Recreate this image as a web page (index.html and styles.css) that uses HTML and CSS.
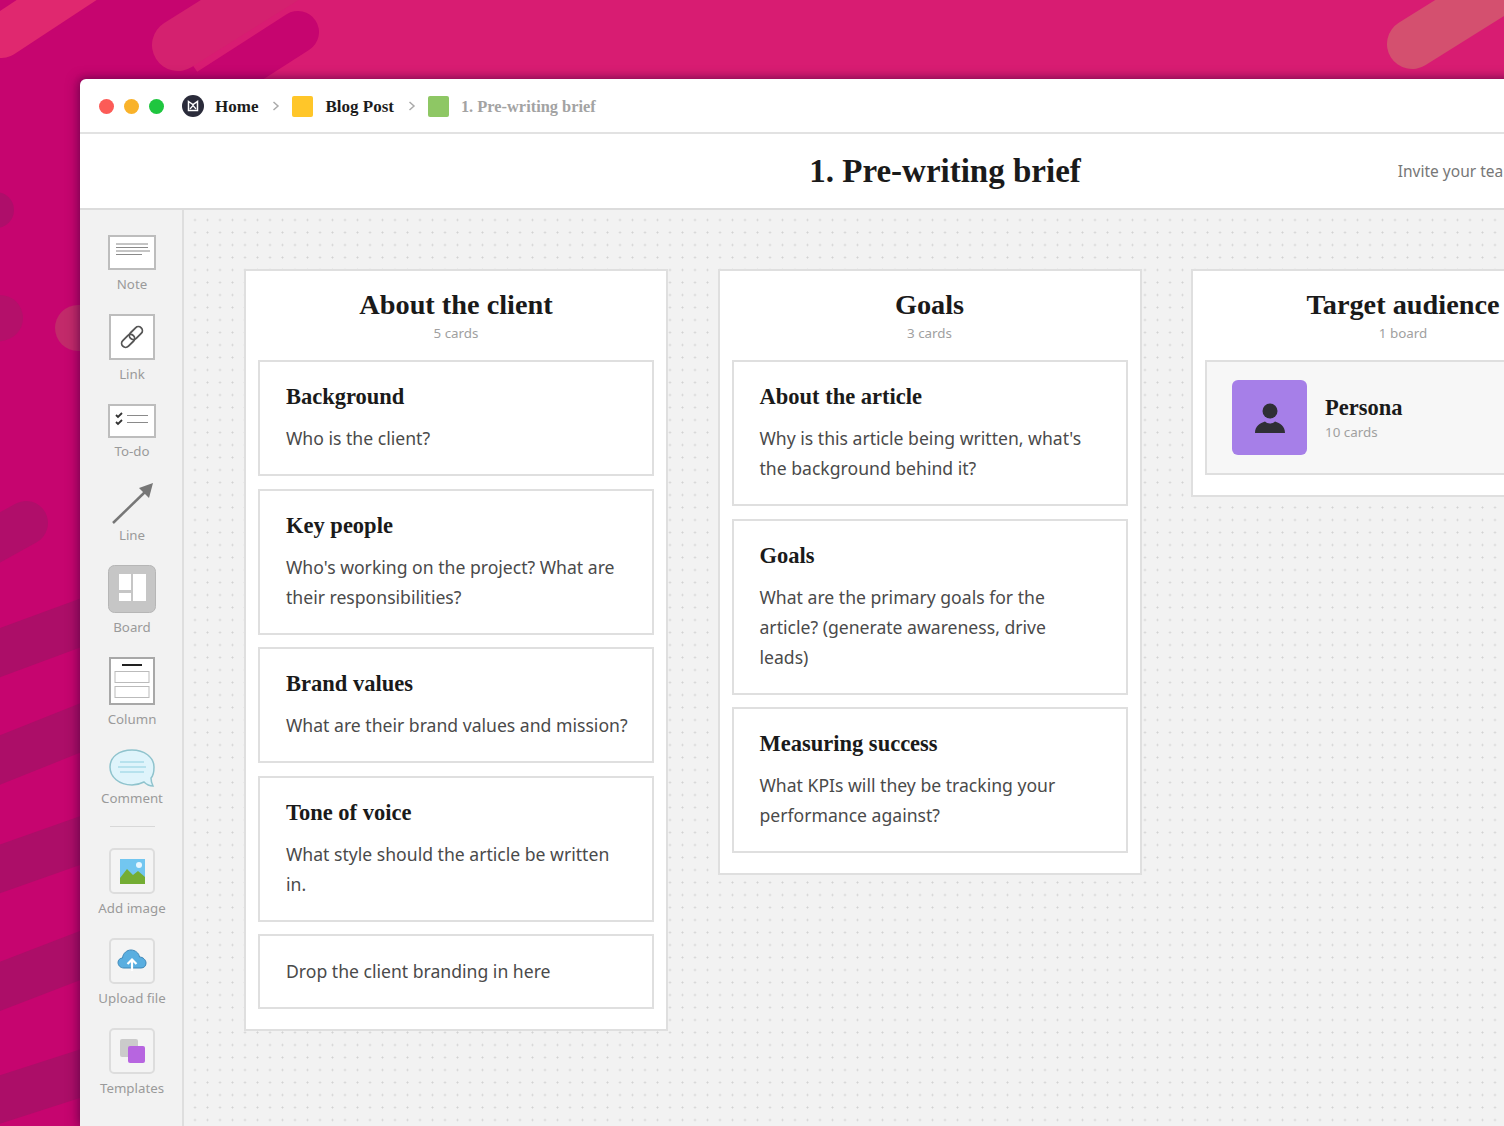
FILE: index.html
```html
<!DOCTYPE html>
<html lang="en">
<head>
  <meta charset="UTF-8">
  <title>1. Pre-writing brief</title>
  <link rel="stylesheet" href="styles.css">
</head>
<body>
  <!-- Backdrop -->
  <svg class="backdrop" width="1504" height="1126" viewBox="0 0 1504 1126" aria-hidden="true">
    <rect width="1504" height="1126" fill="#d81c72"/>
    <polygon points="0,0 205,0 175,40 210,90 90,90 90,1126 0,1126" fill="#c6056f"/>
    <g fill="none" stroke-linecap="round">
      <path d="M178 45L285 -22" stroke="#d4216f" stroke-width="52"/>
      <path d="M298 32L200 95" stroke="#c6056f" stroke-width="42"/>
      <path d="M2 36L90 -22" stroke="#e0286f" stroke-width="44"/>
      <path d="M1412 44L1540 -36" stroke="#d4506f" stroke-width="50"/>
      <path d="M1330 -12L1345 -12" stroke="#e04a80" stroke-width="16"/>
      <path d="M-20 210L-4 210" stroke="#ae0e6a" stroke-width="36"/>
      <path d="M-10 320L0 318" stroke="#b4106a" stroke-width="46"/>
      <path d="M-10 543L26 523" stroke="#b00e6a" stroke-width="44"/>
      <path d="M78 328L100 328" stroke="#c22a6a" stroke-width="46"/>
      <path d="M-20 660L110 612" stroke="#ac0e68" stroke-width="46"/>
      <path d="M-20 768L110 716" stroke="#ac0e68" stroke-width="46"/>
      <path d="M-20 876L110 830" stroke="#ac0e68" stroke-width="46"/>
      <path d="M-20 994L110 944" stroke="#ac0e68" stroke-width="46"/>
      <path d="M-20 1106L110 1064" stroke="#ac0e68" stroke-width="46"/>
    </g>
  </svg>

  <div class="window">
    <!-- Title bar -->
    <div class="titlebar">
      <div class="lights">
        <span class="light light-red"></span>
        <span class="light light-yellow"></span>
        <span class="light light-green"></span>
      </div>
      <nav class="crumbs">
        <svg class="crumb-logo" width="22" height="22" viewBox="0 0 22 22">
          <circle cx="11" cy="11" r="11" fill="#2a2b3a"/>
          <path d="M6.500 6.500L11 9.500L15.500 6.500V15.500H6.500Z" fill="none" stroke="#fff" stroke-width="1.500"/>
          <path d="M8 14L11 10.500L14 14" fill="none" stroke="#fff" stroke-width="1.200"/>
        </svg>
        <a class="crumb">Home</a>
        <svg class="chevron" width="8" height="12" viewBox="0 0 8 12"><path d="M1.500 2L6 6L1.500 10" fill="none" stroke="#aaa" stroke-width="1.500"/></svg>
        <span class="crumb-square crumb-yellow"></span>
        <a class="crumb">Blog Post</a>
        <svg class="chevron" width="8" height="12" viewBox="0 0 8 12"><path d="M1.500 2L6 6L1.500 10" fill="none" stroke="#aaa" stroke-width="1.500"/></svg>
        <span class="crumb-square crumb-green"></span>
        <a class="crumb crumb-current">1. Pre-writing brief</a>
      </nav>
    </div>

    <!-- Page header -->
    <header class="page-header">
      <h1>1. Pre-writing brief</h1>
      <span class="invite">Invite your team</span>
    </header>

    <div class="workspace">
      <!-- Tools -->
      <aside class="toolbar">
        <div class="tool">
          <svg width="48" height="35" viewBox="0 0 48 35">
            <rect x="1" y="1" width="46" height="33" fill="#fff" stroke="#bdbdbd" stroke-width="2"/>
            <path d="M8 9H40M8 12.500H40M8 16H42M8 19.500H34" stroke="#8a8a8a" stroke-width="1"/>
          </svg>
          <span>Note</span>
        </div>
        <div class="tool">
          <svg width="46" height="46" viewBox="0 0 46 46">
            <rect x="1" y="1" width="44" height="44" fill="#fff" stroke="#bdbdbd" stroke-width="2"/>
            <g transform="rotate(-45 23 23)" fill="none" stroke="#555" stroke-width="1.800">
              <rect x="10" y="19" width="15" height="8" rx="4"/>
              <rect x="21" y="19" width="15" height="8" rx="4"/>
            </g>
          </svg>
          <span>Link</span>
        </div>
        <div class="tool tool-tight">
          <svg width="48" height="34" viewBox="0 0 48 34">
            <rect x="1" y="1" width="46" height="32" fill="#fff" stroke="#bdbdbd" stroke-width="2"/>
            <path d="M8 11L10 13L14 9M8 18L10 20L14 16" fill="none" stroke="#333" stroke-width="1.800"/>
            <path d="M19 11.500H40M19 18.500H40" stroke="#8a8a8a" stroke-width="1"/>
          </svg>
          <span>To-do</span>
        </div>
        <div class="tool tool-tighter">
          <svg width="44" height="44" viewBox="0 0 44 44">
            <path d="M3 42L35 11" stroke="#777" stroke-width="2.500"/>
            <path d="M43 2L39 17L29 7Z" fill="#777"/>
          </svg>
          <span>Line</span>
        </div>
        <div class="tool">
          <svg width="48" height="48" viewBox="0 0 48 48">
            <rect x="0.500" y="0.500" width="47" height="47" rx="6" fill="#c6c6c6" stroke="#b6b6b6"/>
            <path d="M11 9H23V25H11ZM11 28H23V36H11ZM25 9H38V36H25Z" fill="#fff"/>
          </svg>
          <span>Board</span>
        </div>
        <div class="tool">
          <svg width="46" height="48" viewBox="0 0 46 48">
            <rect x="1" y="1" width="44" height="46" fill="#fff" stroke="#a8a8a8" stroke-width="2"/>
            <path d="M13 8H33" stroke="#222" stroke-width="2"/>
            <rect x="6" y="14.500" width="34" height="11" fill="#fff" stroke="#bbb"/>
            <rect x="6" y="29.500" width="34" height="11" fill="#fff" stroke="#bbb"/>
          </svg>
          <span>Column</span>
        </div>
        <div class="tool tool-tighter">
          <svg width="48" height="39" viewBox="0 0 48 39">
            <path d="M24 1C36 1 46 8 46 18C46 23 45 27 43 29C43 32 44 35 45 37C41 37 38 35 36 33C32 35 28 36 24 36C11 36 2 28 2 18C2 8 11 1 24 1Z" fill="#dff4fb" stroke="#8fc3cd" stroke-width="1.500"/>
            <path d="M12 13H36M10 18H38M12 23H36" stroke="#8fd0e0" stroke-width="1"/>
          </svg>
          <span>Comment</span>
        </div>
        <hr class="tool-divider">
        <div class="tool">
          <svg width="46" height="46" viewBox="0 0 46 46">
            <rect x="1" y="1" width="44" height="44" rx="4" fill="#f4f4f4" stroke="#ddd" stroke-width="2"/>
            <rect x="11" y="11" width="25" height="25" fill="#72c6f0"/>
            <circle cx="30" cy="17" r="3" fill="#e8f7ff"/>
            <path d="M11 30L18 21L24 27L29 23L36 29V36H11Z" fill="#74ad34"/>
          </svg>
          <span>Add image</span>
        </div>
        <div class="tool">
          <svg width="46" height="46" viewBox="0 0 46 46">
            <rect x="1" y="1" width="44" height="44" rx="4" fill="#f4f4f4" stroke="#ddd" stroke-width="2"/>
            <path d="M15 30C11 30 9 27 9 24.500C9 22 11 20 13.500 20C14 15 18 12 22 12C26 12 30 15 30.500 19C34 19 37 22 37 25C37 28 35 30 32 30Z" fill="#59aee0" stroke="#3d87b8"/>
            <path d="M23 33V22M18.500 26L23 21.500L27.500 26" fill="none" stroke="#fff" stroke-width="2.200"/>
          </svg>
          <span>Upload file</span>
        </div>
        <div class="tool">
          <svg width="46" height="46" viewBox="0 0 46 46">
            <rect x="1" y="1" width="44" height="44" rx="4" fill="#f4f4f4" stroke="#ddd" stroke-width="2"/>
            <rect x="11" y="11" width="18" height="18" rx="2" fill="#cbcbcb"/>
            <rect x="19" y="18" width="17" height="17" rx="2" fill="#b765e0"/>
          </svg>
          <span>Templates</span>
        </div>
      </aside>

      <!-- Board canvas -->
      <main class="canvas">
        <section class="column">
          <h2>About the client</h2>
          <p class="count">5 cards</p>
          <div class="cards">
            <article class="card"><h3>Background</h3><p>Who is the client?</p></article>
            <article class="card"><h3>Key people</h3><p>Who's working on the project? What are their responsibilities?</p></article>
            <article class="card"><h3>Brand values</h3><p>What are their brand values and mission?</p></article>
            <article class="card"><h3>Tone of voice</h3><p>What style should the article be written in.</p></article>
            <article class="card card-plain"><p>Drop the client branding in here</p></article>
          </div>
        </section>

        <section class="column">
          <h2>Goals</h2>
          <p class="count">3 cards</p>
          <div class="cards">
            <article class="card"><h3>About the article</h3><p>Why is this article being written, what's the background behind it?</p></article>
            <article class="card"><h3>Goals</h3><p>What are the primary goals for the article? (generate awareness, drive<br>leads)</p></article>
            <article class="card"><h3>Measuring success</h3><p>What KPIs will they be tracking your performance against?</p></article>
          </div>
        </section>

        <section class="column">
          <h2>Target audience</h2>
          <p class="count">1 board</p>
          <div class="cards">
            <article class="board-card">
              <div class="board-thumb">
                <svg width="32" height="32" viewBox="0 0 32 32">
                  <circle cx="16" cy="9" r="7.500" fill="#2f2f35"/>
                  <path d="M1 31C1 24 6 21 11 19.500C13 22 19 22 21 19.500C26 21 31 24 31 31Z" fill="#2f2f35"/>
                </svg>
              </div>
              <div>
                <h3>Persona</h3>
                <p class="count count-left">10 cards</p>
              </div>
            </article>
          </div>
        </section>
      </main>
    </div>
  </div>
</body>
</html>
```

FILE: styles.css
```css
/* General Reset */
* {
  margin: 0;
  padding: 0;
  box-sizing: border-box;
}

body {
  position: relative;
  width: 1504px;
  height: 1126px;
  padding: 79px 0 0 80px;
  overflow: hidden;
  font-family: "Noto Sans", Arial, sans-serif;
  background-color: #c6056f;
}

.backdrop {
  position: absolute;
  top: 0;
  left: 0;
}

/* Window */
.window {
  position: relative;
  display: flex;
  flex-direction: column;
  width: 1730px;
  height: 1047px;
  background-color: #fff;
  border-top-left-radius: 6px;
  box-shadow: -2px 0 12px rgba(70, 0, 60, 0.5), 0 -1px 6px rgba(70, 0, 60, 0.3);
}

/* Title bar */
.titlebar {
  display: flex;
  align-items: center;
  height: 55px;
  padding: 1px 0 0 19px;
  border-bottom: 2px solid #e2e2e2;
}

.lights {
  display: flex;
  gap: 10px;
}

.light {
  width: 15px;
  height: 15px;
  border-radius: 50%;
}

.light-red { background-color: #fc5b57; }
.light-yellow { background-color: #f9b22a; }
.light-green { background-color: #1fc63f; }

.crumbs {
  display: flex;
  align-items: center;
  margin-left: 18px;
}

.crumb {
  margin-left: 11px;
  padding-top: 1px;
  font-family: "Liberation Serif", serif;
  font-size: 17px;
  font-weight: bold;
  color: #1c1c1c;
}

.crumb-current {
  margin-left: 12px;
  font-size: 16.400px;
  color: #a3a3a3;
}

.chevron {
  margin: 0 12px 0 14px;
}

.crumb-square {
  width: 21px;
  height: 21px;
  border-radius: 2px;
}

.crumb-yellow { background-color: #ffc629; }
.crumb-green { background-color: #8ec764; }

.crumb-yellow + .crumb { margin-left: 12px; }

/* Page header */
.page-header {
  display: grid;
  grid-template-columns: 1fr auto 1fr;
  align-items: center;
  height: 76px;
  border-bottom: 2px solid #dcdcdc;
}

.page-header h1 {
  grid-column: 2;
  font-family: "Liberation Serif", serif;
  font-size: 33px;
  font-weight: bold;
  color: #1a1a1a;
}

.invite {
  margin-left: 317px;
  font-size: 15.500px;
  color: #777;
}

/* Workspace */
.workspace {
  display: flex;
  flex: 1;
  min-height: 0;
}

.toolbar {
  display: flex;
  flex-direction: column;
  align-items: center;
  gap: 21px;
  width: 104px;
  padding: 25px 0 0 2px;
  background-color: #f2f2f2;
  border-right: 2px solid #dedede;
}

.tool {
  display: flex;
  flex-direction: column;
  align-items: center;
  gap: 5px;
}

.tool-tight { gap: 4px; }
.tool-tighter { gap: 1px; }

.tool svg {
  display: block;
}

.tool span {
  font-size: 13.300px;
  line-height: 18px;
  color: #9a9a9a;
}

.tool-divider {
  width: 45px;
  margin: -2px 0 0;
  border: 0;
  border-top: 1px solid #d8d8d8;
}

/* Canvas */
.canvas {
  display: flex;
  flex: 1;
  align-items: flex-start;
  gap: 49.500px;
  padding: 59px 0 0 60px;
  background-color: #f2f2f2;
  background-image: radial-gradient(circle, #d2d2d2 0.8px, transparent 1.2px);
  background-size: 12.500px 12.500px;
  background-position: 4.750px 3.750px;
}

.column {
  flex: 0 0 424px;
  padding: 18px 12px 20px;
  text-align: center;
  background-color: #fff;
  border: 2px solid #dfdfdf;
}

.column h2 {
  font-family: "Liberation Serif", serif;
  font-size: 28.300px;
  line-height: 32px;
  font-weight: bold;
  color: #1a1a1a;
}

.count {
  margin-top: 2px;
  font-size: 13.400px;
  line-height: 20px;
  color: #a0a0a0;
}

.count-left {
  margin-top: 0;
  text-align: left;
}

.cards {
  display: flex;
  flex-direction: column;
  gap: 12.500px;
  margin-top: 17px;
}

.card {
  padding: 20px 24px 21px 26px;
  text-align: left;
  background-color: #fff;
  border: 2px solid #dfdfdf;
}

.card h3,
.board-card h3 {
  font-family: "Liberation Serif", serif;
  font-size: 22.500px;
  line-height: 30px;
  font-weight: bold;
  color: #1a1a1a;
}

.board-card h3 {
  line-height: 28px;
}

.card p {
  margin-top: 11px;
  font-size: 17.600px;
  line-height: 30px;
  color: #4a4a4a;
}

.card-plain p {
  margin-top: 0;
}

.board-card {
  display: flex;
  align-items: center;
  gap: 18px;
  height: 115px;
  padding-left: 25px;
  text-align: left;
  background-color: #f7f7f7;
  border: 2px solid #dfdfdf;
}

.board-thumb {
  display: flex;
  align-items: center;
  justify-content: center;
  width: 75px;
  height: 75px;
  border-radius: 6px;
  background-color: #a67fe8;
}
```
